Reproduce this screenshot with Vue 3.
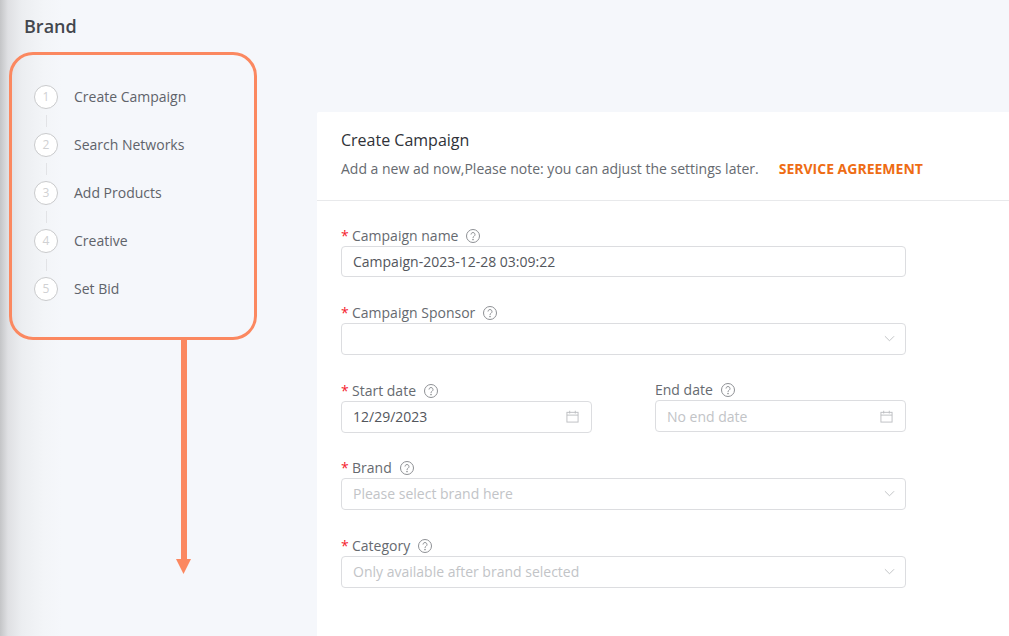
<script setup>
const steps = ['Create Campaign', 'Search Networks', 'Add Products', 'Creative', 'Set Bid']
</script>

<template>
  <div class="page">
    <div class="edge-shadow"></div>
    <aside class="side">
      <h1 class="brand">Brand</h1>
      <div class="steps">
        <div v-for="(s, i) in steps" :key="s" class="step">
          <span class="num">{{ i + 1 }}</span>
          <span class="step-label">{{ s }}</span>
          <span v-if="i < steps.length - 1" class="link"></span>
        </div>
      </div>
    </aside>

    <main class="main">
      <header class="head">
        <div class="title">Create Campaign</div>
        <div class="sub">
          <span>Add a new ad now,Please note: you can adjust the settings later.</span>
          <a class="agree">SERVICE AGREEMENT</a>
        </div>
      </header>

      <form class="form">
        <div class="field f1">
          <label class="lab"><i>*</i>Campaign name<svg class="q" viewBox="0 0 14 14"><circle cx="7" cy="7" r="6.5" /><path d="M5 5.5a2 2 0 1 1 3.1 1.7c-.8.5-1.1.9-1.1 1.7" /><circle class="dot" cx="7" cy="10.6" r=".8" /></svg></label>
          <div class="box h31"><span class="val">Campaign-2023-12-28 03:09:22</span></div>
        </div>

        <div class="field f2">
          <label class="lab"><i>*</i>Campaign Sponsor<svg class="q" viewBox="0 0 14 14"><circle cx="7" cy="7" r="6.5" /><path d="M5 5.5a2 2 0 1 1 3.1 1.7c-.8.5-1.1.9-1.1 1.7" /><circle class="dot" cx="7" cy="10.6" r=".8" /></svg></label>
          <div class="box"><span></span><svg class="chev" viewBox="0 0 12 7"><path d="M1 1l5 5 5-5" /></svg></div>
        </div>

        <div class="dates">
          <div class="field start">
            <label class="lab"><i>*</i>Start date<svg class="q" viewBox="0 0 14 14"><circle cx="7" cy="7" r="6.5" /><path d="M5 5.5a2 2 0 1 1 3.1 1.7c-.8.5-1.1.9-1.1 1.7" /><circle class="dot" cx="7" cy="10.6" r=".8" /></svg></label>
            <div class="box"><span class="val">12/29/2023</span><svg class="cal" viewBox="0 0 14 14"><rect x="1" y="2.5" width="12" height="10.5" /><path d="M1 5.5h12M4 .8v3M10 .8v3" /></svg></div>
          </div>
          <div class="field end">
            <label class="lab">End date<svg class="q" viewBox="0 0 14 14"><circle cx="7" cy="7" r="6.5" /><path d="M5 5.5a2 2 0 1 1 3.1 1.7c-.8.5-1.1.9-1.1 1.7" /><circle class="dot" cx="7" cy="10.6" r=".8" /></svg></label>
            <div class="box end-box"><span class="ph">No end date</span><svg class="cal" viewBox="0 0 14 14"><rect x="1" y="2.5" width="12" height="10.5" /><path d="M1 5.5h12M4 .8v3M10 .8v3" /></svg></div>
          </div>
        </div>

        <div class="field">
          <label class="lab"><i>*</i>Brand<svg class="q" viewBox="0 0 14 14"><circle cx="7" cy="7" r="6.5" /><path d="M5 5.5a2 2 0 1 1 3.1 1.7c-.8.5-1.1.9-1.1 1.7" /><circle class="dot" cx="7" cy="10.6" r=".8" /></svg></label>
          <div class="box"><span class="ph">Please select brand here</span><svg class="chev" viewBox="0 0 12 7"><path d="M1 1l5 5 5-5" /></svg></div>
        </div>

        <div class="field">
          <label class="lab"><i>*</i>Category<svg class="q" viewBox="0 0 14 14"><circle cx="7" cy="7" r="6.5" /><path d="M5 5.5a2 2 0 1 1 3.1 1.7c-.8.5-1.1.9-1.1 1.7" /><circle class="dot" cx="7" cy="10.6" r=".8" /></svg></label>
          <div class="box"><span class="ph">Only available after brand selected</span><svg class="chev" viewBox="0 0 12 7"><path d="M1 1l5 5 5-5" /></svg></div>
        </div>
      </form>
    </main>

    <div class="callout"></div>
    <div class="arrow-line"></div>
    <svg class="arrow-head" viewBox="0 0 15 15"><path d="M0 0h15L7.5 15z" /></svg>
  </div>
</template>

<style>
html, body { margin: 0; padding: 0; overflow: hidden; }
</style>

<style scoped>
.page {
  position: relative;
  display: flex;
  width: 1009px;
  height: 636px;
  overflow: hidden;
  background: #f5f7fb;
  font-family: "Open Sans", sans-serif;
  font-size: 14px;
  color: #5f636a;
}
.edge-shadow {
  position: absolute;
  left: 0;
  top: 0;
  bottom: 0;
  width: 62px;
  background: linear-gradient(90deg, #c4c5c7 0, #dfe0e3 8px, #eceef1 22px, #f3f5f8 44px, #f5f7fb 62px);
}
.side {
  position: relative;
  width: 317px;
  flex: none;
}
.brand {
  margin: 0;
  padding: 14px 0 0 24px;
  font-size: 18px;
  line-height: 24px;
  font-weight: 600;
  color: #43474e;
}
.steps {
  padding: 47px 0 0 34px;
}
.step {
  position: relative;
  display: flex;
  align-items: center;
  height: 24px;
  margin-bottom: 24px;
}
.num {
  box-sizing: border-box;
  width: 24px;
  height: 24px;
  border: 1px solid #c9cacc;
  border-radius: 50%;
  background: #fff;
  color: #d0d1d3;
  font-size: 12px;
  line-height: 22px;
  text-align: center;
}
.step-label {
  margin-left: 16px;
  line-height: 20px;
}
.link {
  position: absolute;
  left: 12px;
  top: 30px;
  width: 1px;
  height: 12px;
  background: #e2e3e6;
}
.main {
  flex: 1;
  margin-top: 112px;
  background: #fff;
  border-radius: 2px 0 0 0;
}
.head {
  height: 89px;
  box-sizing: border-box;
  padding: 17px 24px 0;
  border-bottom: 1px solid #e8e9eb;
}
.title {
  font-size: 16px;
  line-height: 22px;
  color: #2f3238;
}
.sub {
  display: flex;
  margin-top: 8px;
  line-height: 20px;
  color: #666a70;
}
.agree {
  margin-left: 20px;
  font-weight: 700;
  color: #ee6c14;
}
.form {
  padding: 25px 0 0 24px;
  width: 565px;
}
.field {
  margin-bottom: 26px;
}
.f2 {
  margin-bottom: 25px;
}
.lab {
  display: flex;
  align-items: center;
  height: 20px;
  line-height: 20px;
  color: #666a70;
}
.lab i {
  width: 11px;
  color: #f5222d;
  font-style: normal;
}
.q {
  width: 14px;
  height: 14px;
  margin-left: 8px;
  fill: none;
  stroke: #8e9094;
  stroke-width: 1;
}
.q .dot {
  fill: #8e9094;
  stroke: none;
}
.box {
  box-sizing: border-box;
  display: flex;
  align-items: center;
  justify-content: space-between;
  height: 32px;
  padding: 0 11px 1px 11px;
  border: 1px solid #dcdde0;
  border-radius: 4px;
  background: #fff;
}
.h31 {
  height: 31px;
  padding-bottom: 0;
}
.end-box {
  padding-bottom: 0;
}
.val {
  color: #53565c;
}
.ph {
  color: #c2c4c7;
}
.chev {
  width: 11px;
  height: 7px;
  margin-right: -1px;
  fill: none;
  stroke: #bcbec1;
  stroke-width: 1;
}
.cal {
  width: 13px;
  height: 13px;
  margin-right: 1px;
  fill: none;
  stroke: #bcbec1;
  stroke-width: 1;
}
.dates {
  display: flex;
  justify-content: space-between;
}
.start,
.end {
  width: 251px;
}
.start {
  padding-top: 1px;
  margin-bottom: 25px;
}
.end {
  margin-bottom: 26px;
}
.callout {
  position: absolute;
  left: 9px;
  top: 52px;
  width: 248px;
  height: 288px;
  box-sizing: border-box;
  border: 3px solid #fb8860;
  border-radius: 24px;
}
.arrow-line {
  position: absolute;
  left: 181px;
  top: 340px;
  width: 6px;
  height: 220px;
  background: #fb8860;
}
.arrow-head {
  position: absolute;
  left: 176px;
  top: 559px;
  width: 15px;
  height: 15px;
  fill: #fb8860;
}
</style>
